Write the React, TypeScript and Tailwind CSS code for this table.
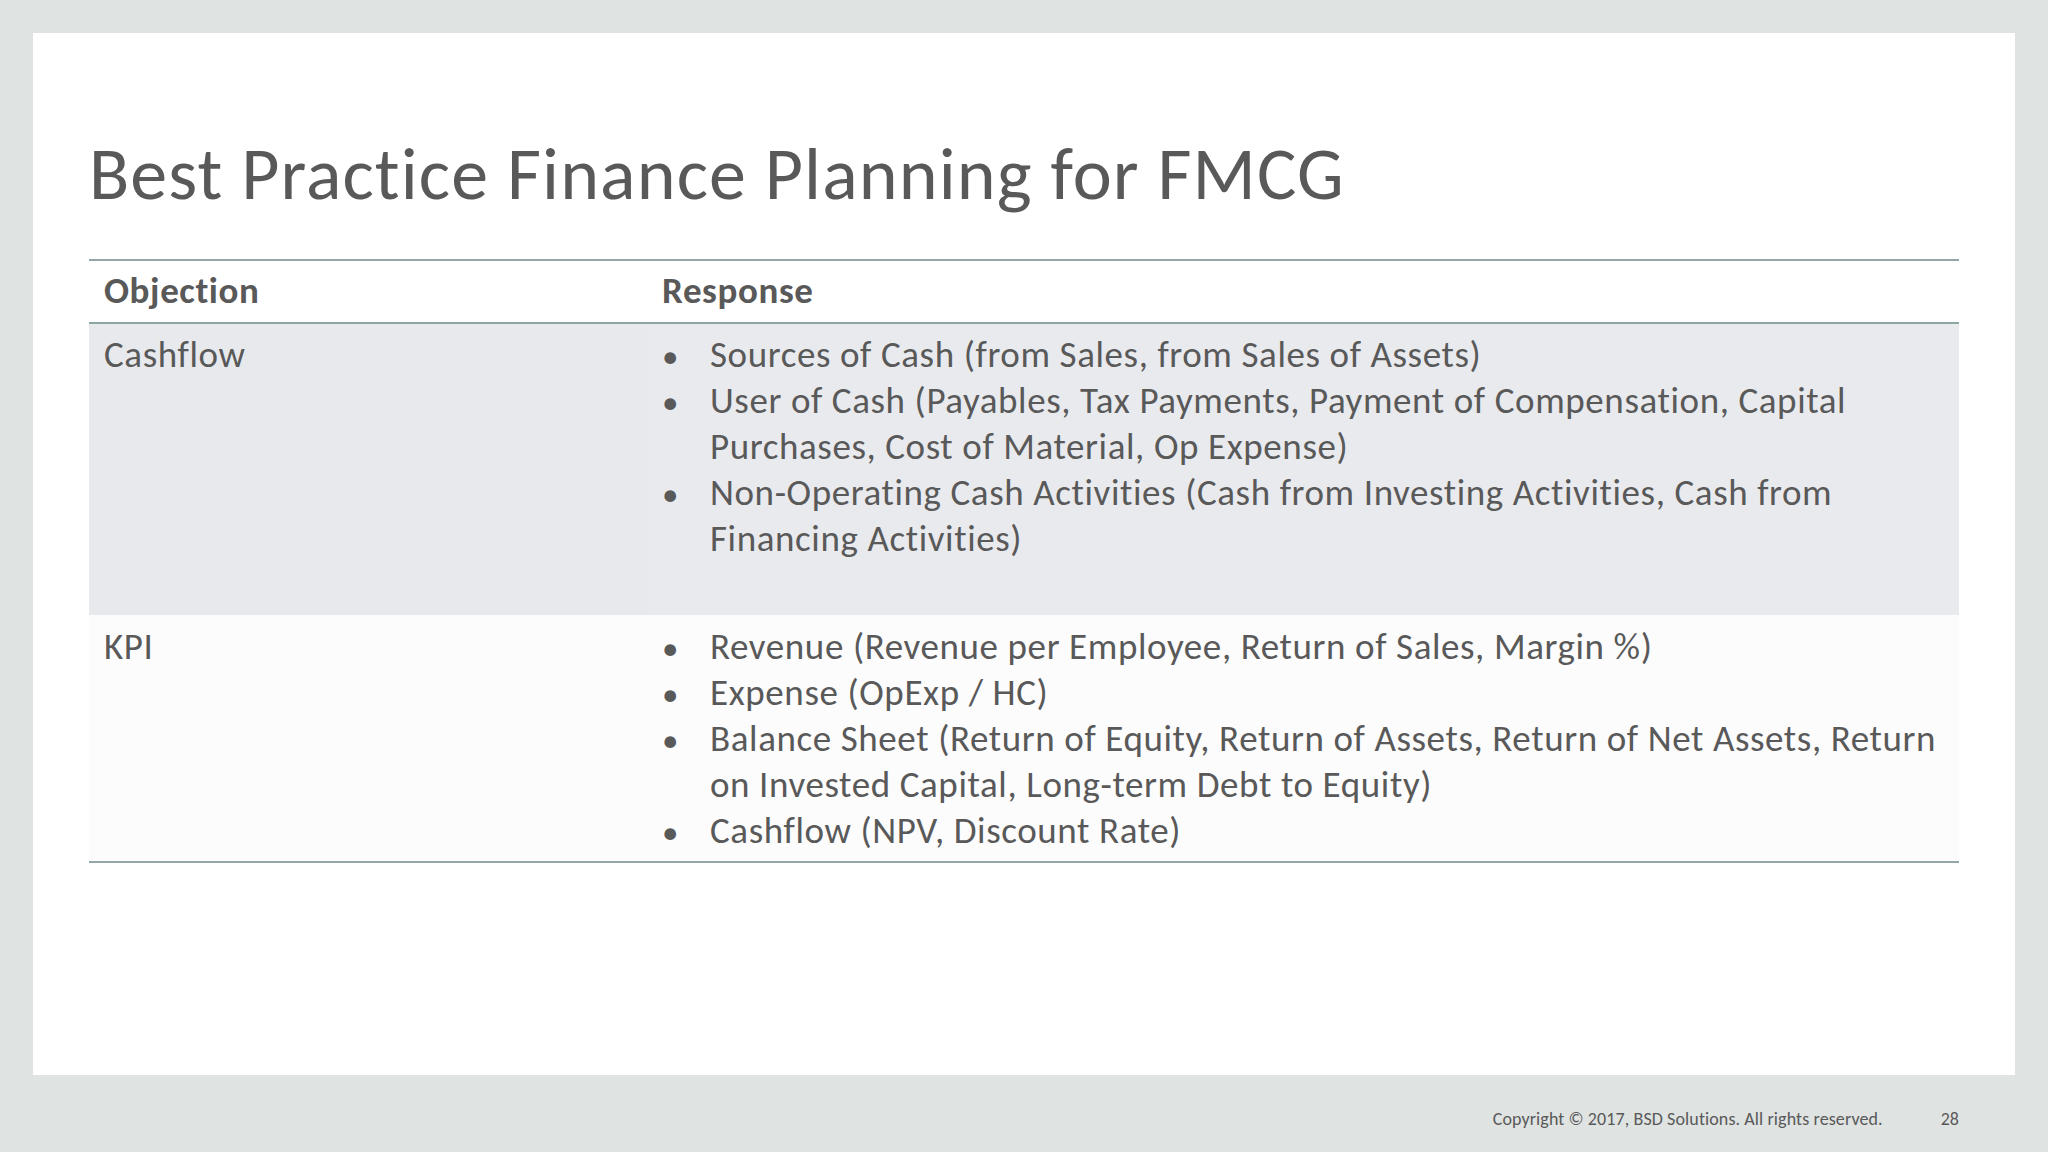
import React from 'react';

type Item = string[];

const cashflowItems: Item[] = [
  ['Sources of Cash (from Sales, from Sales of Assets)'],
  ['User of Cash (Payables, Tax Payments, Payment of Compensation, Capital', 'Purchases, Cost of Material, Op Expense)'],
  ['Non-Operating Cash Activities (Cash from Investing Activities, Cash from', 'Financing Activities)'],
];

const kpiItems: Item[] = [
  ['Revenue (Revenue per Employee, Return of Sales, Margin %)'],
  ['Expense (OpExp / HC)'],
  ['Balance Sheet (Return of Equity, Return of Assets, Return of Net Assets, Return', 'on Invested Capital, Long-term Debt to Equity)'],
  ['Cashflow (NPV, Discount Rate)'],
];

function Bullets({ items }: { items: Item[] }) {
  return (
    <ul className="flex flex-col">
      {items.map((lines, i) => (
        <li key={i} className="flex items-baseline">
          <span className="w-[48px] shrink-0 text-[33px] leading-[30px]">•</span>
          <span className="flex flex-col">
            {lines.map((l, j) => (
              <span key={j} className="whitespace-nowrap">{l}</span>
            ))}
          </span>
        </li>
      ))}
    </ul>
  );
}

export default function App() {
  return (
    <div className="w-[2048px] h-[1152px] bg-[#dfe3e2] flex flex-col font-['Carlito','Calibri','Lato',sans-serif] text-[#595959] overflow-hidden">
      {/* slide */}
      <div className="mt-[33px] mx-[33px] h-[1042px] bg-white pl-[56px] pt-[96px]">
        <h1 className="text-[74px] leading-[90px] tracking-[1.1px]">Best Practice Finance Planning for FMCG</h1>

        {/* table */}
        <div className="mt-[40px] w-[1870px] border-t-2 border-b-2 border-[#93a7aa] text-[37px] leading-[46px] tracking-[0.6px]">
          <div className="grid grid-cols-[558px_1fr] h-[63px] border-b-2 border-[#8ea6a3] font-bold">
            <div className="pl-[15px] pt-[7px]">Objection</div>
            <div className="pl-[15px] pt-[7px]">Response</div>
          </div>
          <div className="grid grid-cols-[558px_1fr] h-[291px]">
            <div className="bg-[#e8e9ed] pl-[15px] pt-[8px]">Cashflow</div>
            <div className="bg-[#e9eaee] pl-[15px] pt-[8px]">
              <Bullets items={cashflowItems} />
            </div>
          </div>
          <div className="grid grid-cols-[558px_1fr] h-[246px] bg-[#fcfcfd]">
            <div className="pl-[15px] pt-[9px]">KPI</div>
            <div className="pl-[15px] pt-[9px]">
              <Bullets items={kpiItems} />
            </div>
          </div>
        </div>
      </div>

      {/* footer */}
      <div className="flex justify-end pr-[89px] pt-[33px] text-[18px] leading-[22px]">
        <span className="tracking-[0.1px]">Copyright © 2017, BSD Solutions. All rights reserved.</span>
        <span className="ml-[58px]">28</span>
      </div>
    </div>
  );
}
